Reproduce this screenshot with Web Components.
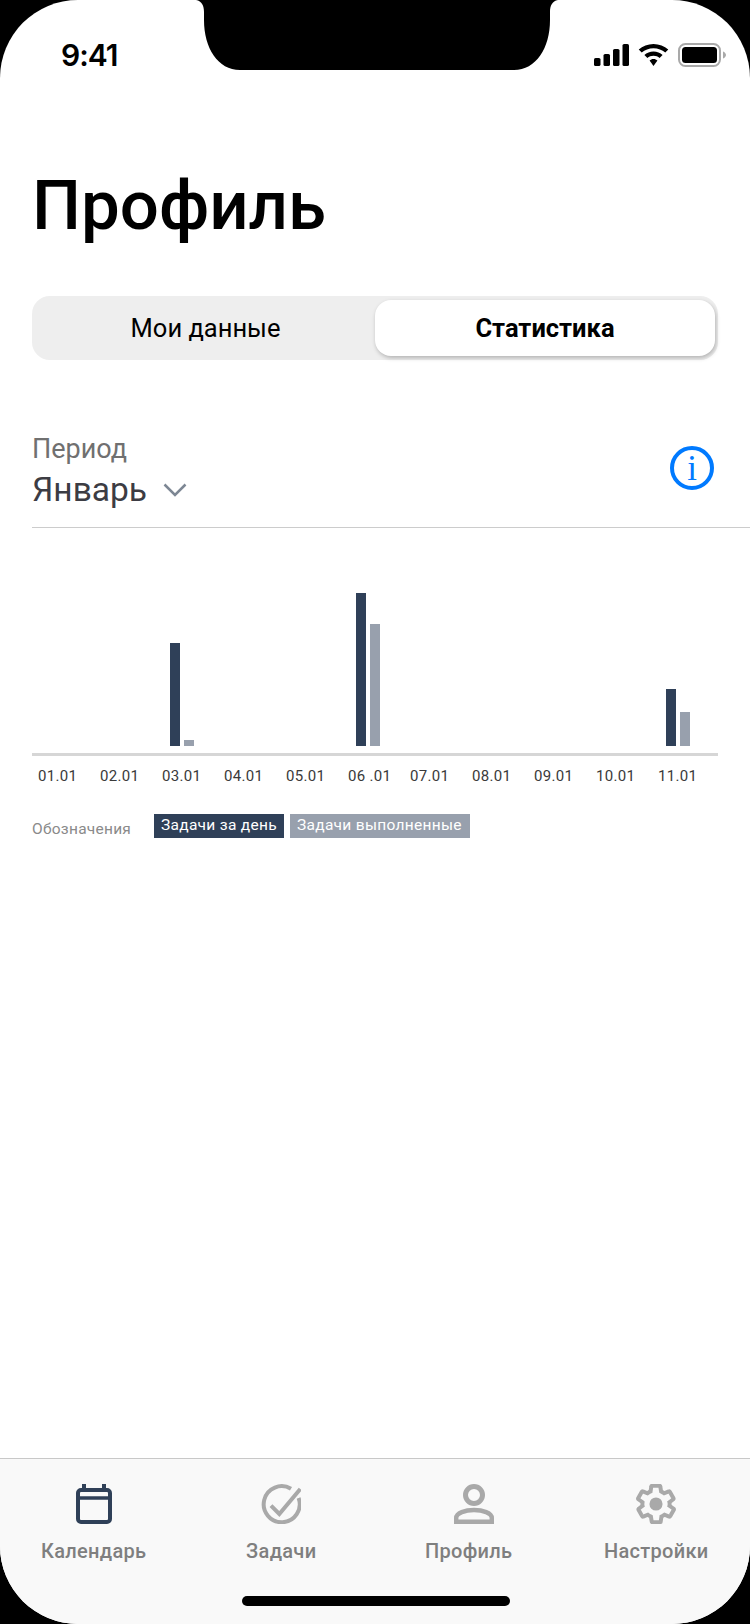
<!DOCTYPE html>
<html lang="ru">
<head>
<meta charset="utf-8">
<title>Профиль</title>
<style>
  html, body { margin: 0; padding: 0; background: #000; }
  body { width: 750px; height: 1624px; overflow: hidden; font-family: Roboto, "Noto Sans", sans-serif; }
</style>
</head>
<body>
<phone-screen>
  <status-bar slot="top"></status-bar>
  <profile-title>Профиль</profile-title>
  <segment-switch first="Мои данные" second="Статистика"></segment-switch>
  <period-picker label="Период" value="Январь"></period-picker>
  <bar-chart></bar-chart>
  <chart-legend></chart-legend>
  <tab-bar slot="bottom"></tab-bar>
</phone-screen>

<script>
class PhoneScreen extends HTMLElement {
  connectedCallback() {
    const root = this.attachShadow({ mode: "open" });
    root.innerHTML = `
      <style>
        :host { display: flex; flex-direction: column; width: 750px; height: 1624px; background: #fff; border-radius: 78px; overflow: hidden; position: relative; }
        main { flex: 1; display: flex; flex-direction: column; padding: 0 0 0 32px; }
        .notch { position: absolute; top: 0; left: 196px; width: 362px; height: 70px; }
        .home { position: absolute; left: 242px; top: 1596px; width: 268px; height: 10px; border-radius: 5px; background: #000; }
      </style>
      <slot name="top"></slot>
      <main><slot></slot></main>
      <slot name="bottom"></slot>
      <svg class="notch" viewBox="0 0 362 70"><path d="M0 0 C6 1 8 6 8 12 V20 C8 48 22 70 44 70 H318 C340 70 354 48 354 20 V12 C354 6 356 1 362 0Z" fill="#000"/></svg>
      <div class="home"></div>
    `;
  }
}
customElements.define("phone-screen", PhoneScreen);

class StatusBar extends HTMLElement {
  connectedCallback() {
    const root = this.attachShadow({ mode: "open" });
    root.innerHTML = `
      <style>
        :host { display: flex; justify-content: space-between; align-items: center; height: 110px; padding: 0 23px 0 61px; box-sizing: border-box; }
        .time { font: 600 30px/36px Inter, "Liberation Sans", sans-serif; color: #000; margin-top: -1px; letter-spacing: -1px; }
        .icons { display: flex; align-items: center; gap: 9px; margin-top: -1px; }
        svg { display: block; }
      </style>
      <span class="time">9:41</span>
      <div class="icons">
        <svg width="35" height="22" viewBox="0 0 35 22"><rect x="0" y="14" width="6.500" height="8" rx="1.600"/><rect x="9.500" y="10" width="6.500" height="12" rx="1.600"/><rect x="19" y="5" width="6.500" height="17" rx="1.600"/><rect x="28.500" y="0" width="6.500" height="22" rx="1.600"/></svg>
        <svg width="31" height="22" viewBox="0 0 30 22" preserveAspectRatio="none"><path d="M15 0C9.500 0 4.500 2.100 .7 5.600l2.900 3C6.600 5.900 10.600 4.200 15 4.200s8.400 1.700 11.400 4.400l2.900-3C25.500 2.100 20.500 0 15 0z"/><path d="M15 7.600c-3.400 0-6.500 1.300-8.800 3.400l2.900 3c1.500-1.400 3.600-2.200 5.900-2.200s4.400.8 5.900 2.200l2.900-3C21.500 8.900 18.400 7.600 15 7.600z"/><path d="M15 15c-1.500 0-2.800.6-3.800 1.500L15 22l3.800-5.500C17.800 15.600 16.500 15 15 15z"/></svg>
        <svg width="49" height="24" viewBox="0 0 49 24"><rect x="1" y="1" width="41" height="22" rx="6.500" fill="none" stroke="#a9a9a9" stroke-width="2"/><rect x="4" y="4" width="35" height="16" rx="3.500"/><path d="M45 8.500c1.700.6 3 2 3 3.500s-1.300 2.900-3 3.500z" fill="#a9a9a9"/></svg>
      </div>
    `;
  }
}
customElements.define("status-bar", StatusBar);

class ProfileTitle extends HTMLElement {
  connectedCallback() {
    this.attachShadow({ mode: "open" }).innerHTML = `
      <style>
        :host { display: block; font: 500 69px/84px Roboto, sans-serif; color: #000; margin: 54px 0 0 0; }
      </style>
      <slot></slot>
    `;
  }
}
customElements.define("profile-title", ProfileTitle);

class SegmentSwitch extends HTMLElement {
  connectedCallback() {
    this.attachShadow({ mode: "open" }).innerHTML = `
      <style>
        :host { display: flex; width: 686px; height: 64px; box-sizing: border-box; margin-top: 48px; padding: 4px 3px 4px 4px; background: #eee; border-radius: 18px; font: 400 25.500px/56px Roboto, sans-serif; color: #000; }
        div { flex: 1; text-align: center; }
        .on { flex: none; width: 340px; background: #fff; border-radius: 16px; font-weight: 700; box-shadow: 1px 2px 4px rgba(0,0,0,.25); }
      </style>
      <div>${this.getAttribute("first")}</div>
      <div class="on">${this.getAttribute("second")}</div>
    `;
  }
}
customElements.define("segment-switch", SegmentSwitch);

class PeriodPicker extends HTMLElement {
  connectedCallback() {
    this.attachShadow({ mode: "open" }).innerHTML = `
      <style>
        :host { display: flex; justify-content: space-between; align-items: flex-start; height: 95px; margin-top: 72px; padding-right: 36px; border-bottom: 1px solid #ccc; }
        .label { font: 400 27px/34px Roboto, sans-serif; color: #707070; }
        .value { display: flex; align-items: center; gap: 16px; margin-top: 4px; font: 400 33.500px/40px Roboto, sans-serif; color: #3c3c43; }
        svg { display: block; }
        .info { margin-top: 14px; }
      </style>
      <div>
        <div class="label">${this.getAttribute("label")}</div>
        <div class="value">${this.getAttribute("value")}
          <svg width="24" height="14" viewBox="0 0 24 14"><path d="M1.500 1.500L12 12 22.500 1.500" fill="none" stroke="#7d8794" stroke-width="2.500"/></svg>
        </div>
      </div>
      <svg class="info" width="44" height="44" viewBox="0 0 44 44"><circle cx="22" cy="22" r="20" fill="none" stroke="#007aff" stroke-width="4"/><text x="22" y="34" text-anchor="middle" font-family="Liberation Serif" font-size="35" fill="#007aff">i</text></svg>
    `;
  }
}
customElements.define("period-picker", PeriodPicker);

class BarChart extends HTMLElement {
  connectedCallback() {
    const data = [
      ["01.01"], ["02.01"], ["03.01", 103, 6], ["04.01"], ["05.01"], ["06 .01", 153, 122],
      ["07.01"], ["08.01"], ["09.01"], ["10.01"], ["11.01", 57, 34]
    ];
    const cols = data.map(([day, total, done]) => `
      <div class="col">
        <div class="bars">
          ${total ? `<i class="total" style="height:${total}px"></i><i class="done" style="height:${done}px"></i>` : ""}
        </div>
        <span>${day}</span>
      </div>`).join("");
    this.attachShadow({ mode: "open" }).innerHTML = `
      <style>
        :host { display: block; width: 686px; margin-top: 65px; }
        .plot { display: grid; grid-template-columns: repeat(11, 62px); padding-left: 6px; }
        .col { display: flex; flex-direction: column; min-width: 0; }
        .bars { height: 153px; display: flex; align-items: flex-end; gap: 4px; padding: 0 0 7px 8px; border-bottom: 3px solid #d6d6d6; }
        .col:first-child .bars { margin-left: -6px; padding-left: 14px; }
        .col:last-child .bars { margin-right: 2px; }
        i { display: block; width: 10px; }
        .total { background: #2f4058; }
        .done { background: #98a0ad; }
        span { font: 400 15px/20px Roboto, sans-serif; color: #3a3a3a; margin-top: 10px; white-space: nowrap; letter-spacing: .3px; }
      </style>
      <div class="plot">${cols}</div>
    `;
  }
}
customElements.define("bar-chart", BarChart);

class ChartLegend extends HTMLElement {
  connectedCallback() {
    this.attachShadow({ mode: "open" }).innerHTML = `
      <style>
        :host { display: flex; align-items: flex-start; height: 24px; margin-top: 28px; font: 400 15.500px/24px Roboto, sans-serif; }
        .cap { color: #8a8a8a; width: 122px; padding-top: 3px; letter-spacing: .25px; }
        .tag { height: 24px; box-sizing: border-box; padding: 0 7px; margin-right: 6px; color: #fff; letter-spacing: .3px; line-height: 23px; white-space: nowrap; }
        .a { background: #2f4058; width: 130px; }
        .b { background: #98a0ad; width: 180px; }
      </style>
      <span class="cap">Обозначения</span>
      <span class="tag a">Задачи за день</span>
      <span class="tag b">Задачи выполненные</span>
    `;
  }
}
customElements.define("chart-legend", ChartLegend);

class TabBar extends HTMLElement {
  connectedCallback() {
    const dark = "#2f4058", grey = "#a9a9a9";
    const tabs = [
      ["Календарь", `<svg width="40" height="40" viewBox="0 0 40 40" fill="none"><rect x="4" y="6" width="32" height="32" rx="3" stroke="${dark}" stroke-width="4"/><path d="M3 14H37" stroke="${dark}" stroke-width="3.500"/><path d="M10 0v5M30 0v5" stroke="${dark}" stroke-width="4"/></svg>`],
      ["Задачи", `<svg width="40" height="40" viewBox="0 0 40 40" fill="none"><path d="M30 4.800A18 18 0 1 0 37.600 14" stroke="${grey}" stroke-width="4"/><path d="M10 21.700l8.300 8.300L39.300 5" stroke="${grey}" stroke-width="4"/></svg>`],
      ["Профиль", `<svg class="shift" width="40" height="40" viewBox="0 0 40 40" fill="none"><circle cx="20" cy="11" r="8.500" stroke="${grey}" stroke-width="5"/><path d="M2.200 37.800v-3.800c0-5 9-8 17.800-8s17.800 3 17.800 8v3.800z" stroke="${grey}" stroke-width="4.400"/></svg>`],
      ["Настройки", `<svg width="40" height="40" viewBox="1 1 22 22" fill="none"><path d="M19.400 13c.1-.3.1-.7.1-1s0-.7-.1-1l2.100-1.600c.2-.2.200-.4.100-.6l-2-3.500c-.1-.2-.4-.3-.6-.2l-2.500 1c-.5-.4-1.100-.7-1.700-1l-.4-2.600c0-.3-.2-.5-.5-.5h-4c-.3 0-.5.2-.5.400l-.4 2.700c-.6.2-1.100.6-1.700 1l-2.500-1c-.2-.1-.5 0-.6.2l-2 3.500c-.1.200-.1.400.1.600L4.600 11c0 .3-.1.700-.1 1s0 .7.1 1l-2.100 1.600c-.2.200-.2.400-.1.600l2 3.500c.1.200.4.300.6.200l2.500-1c.5.400 1.100.7 1.700 1l.4 2.600c0 .3.200.500.500.500h4c.3 0 .5-.2.5-.4l.4-2.700c.6-.2 1.100-.6 1.700-1l2.500 1c.2.100.5 0 .6-.2l2-3.500c.1-.2.100-.4-.1-.6z" stroke="${grey}" stroke-width="2.200"/><circle cx="12" cy="12" r="3.600" fill="${grey}"/></svg>`]
    ];
    this.attachShadow({ mode: "open" }).innerHTML = `
      <style>
        :host { display: grid; grid-template-columns: repeat(4, 1fr); height: 166px; box-sizing: border-box; padding-top: 25px; background: #f9f9f9; border-top: 1px solid #c8c8c8; }
        .tab { display: flex; flex-direction: column; align-items: center; font: 500 20px/24px Roboto, sans-serif; color: #7f7f7f; letter-spacing: .3px; }
        .tab:first-child { color: ${dark}; font-weight: 700; }
        svg { display: block; margin-bottom: 15px; }
        .shift { margin-left: 10px; }
      </style>
      ${tabs.map(([name, icon]) => `<div class="tab">${icon}<span>${name}</span></div>`).join("")}
    `;
  }
}
customElements.define("tab-bar", TabBar);
</script>
</body>
</html>
